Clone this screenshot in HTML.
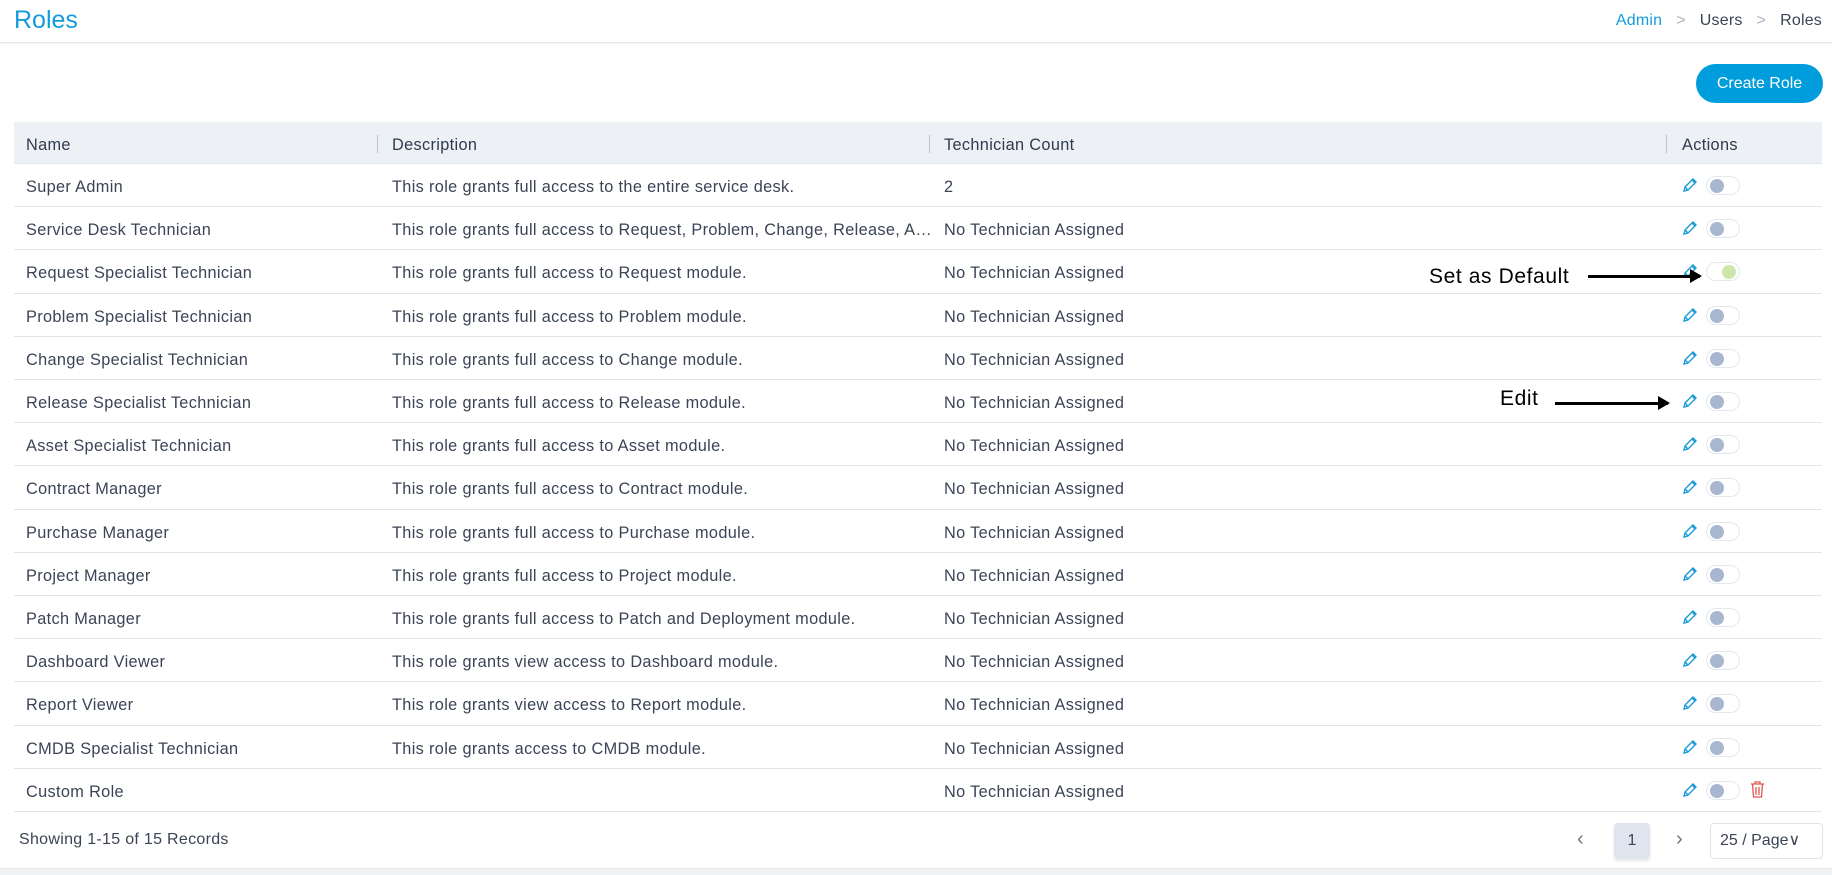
<!DOCTYPE html>
<html><head><meta charset="utf-8"><style>
*{box-sizing:border-box;margin:0;padding:0}
body{width:1832px;height:875px;background:#fff;font-family:"Liberation Sans",sans-serif;color:#3b4456;position:relative;overflow:hidden}
.top{position:absolute;left:0;top:0;width:1832px;height:43px;border-bottom:1px solid #dfe4ec;box-shadow:0 1px 2px rgba(0,0,0,.03)}
.title{position:absolute;left:14px;top:6px;font-size:25px;color:#139cdb}
.bc{position:absolute;right:10px;top:12px;font-size:16px;color:#3b4456;letter-spacing:.2px}
.bc span.a{color:#139cdb}.bc .sep{color:#aab3c0;margin:0 14px}
.btn{position:absolute;left:1696px;top:64px;width:127px;height:39px;border-radius:20px;background:#009ddc;color:#fff;font-size:16px;text-align:center;line-height:39px}
.th{position:absolute;left:14px;top:122px;width:1808px;height:42px;background:#edf1f6;border-bottom:1px solid #dfe4ec}
.row{position:absolute;left:14px;width:1808px;height:43.2px;border-bottom:1px solid #dfe4ec}
.c{position:absolute;top:0;line-height:46px;font-size:16.3px;letter-spacing:.35px;white-space:nowrap;overflow:hidden;text-overflow:ellipsis}
.dv{position:absolute;top:13px;width:1px;height:18px;background:#b8c2cf}
.pen{position:absolute;left:1668px;top:13px}
.tg{position:absolute;left:1692px;top:12px;width:34px;height:19px;border:1px solid #e3e8ef;border-radius:10px}
.tg i{position:absolute;left:3px;top:2px;width:14px;height:14px;border-radius:50%;background:#a8b7cf}
.tg.on i{left:auto;right:3px;background:#cde6ac}
.ann{position:absolute;font-size:21px;letter-spacing:.6px;color:#000}
.arr{position:absolute;height:3px;background:#000}
.arr:after{content:"";position:absolute;right:-2px;top:-6px;border-left:12px solid #000;border-top:7.5px solid transparent;border-bottom:7.5px solid transparent}
</style></head><body>
<div class="top"><div class="title">Roles</div>
<div class="bc"><span class="a">Admin</span><span class="sep">&gt;</span>Users<span class="sep">&gt;</span>Roles</div></div>
<div class="btn">Create Role</div>
<div class="th">
<div class="c" style="left:12px;color:#2f3a4c">Name</div>
<div class="dv" style="left:363px"></div>
<div class="c" style="left:378px;color:#2f3a4c">Description</div>
<div class="dv" style="left:915px"></div>
<div class="c" style="left:930px;color:#2f3a4c">Technician Count</div>
<div class="dv" style="left:1652px"></div>
<div class="c" style="left:1668px;color:#2f3a4c">Actions</div>
</div>
<div id="rows"></div>
<div style="position:absolute;left:19px;top:831px;font-size:16px;letter-spacing:.3px">Showing 1-15 of 15 Records</div>
<div style="position:absolute;left:1577px;top:828px;font-size:20px;color:#6b7585">&#8249;</div>
<div style="position:absolute;left:1614px;top:823px;width:36px;height:36px;background:#dfe5ee;border-radius:4px;text-align:center;line-height:36px;font-size:16px;box-shadow:0 2px 3px rgba(0,0,0,.1)">1</div>
<div style="position:absolute;left:1676px;top:828px;font-size:20px;color:#6b7585">&#8250;</div>
<div style="position:absolute;left:1710px;top:823px;width:113px;height:36px;border:1px solid #dfe4ec;border-radius:4px;font-size:16px;line-height:34px;padding-left:9px">25 / Page&#8744;</div>
<div style="position:absolute;left:0;top:868px;width:1832px;height:7px;background:#f1f2f4;border-top:1px solid #e3e5e8"></div>
<div class="ann" style="left:1429px;top:265px">Set as Default</div>
<div class="arr" style="left:1588px;top:275px;width:112px"></div>
<div class="ann" style="left:1500px;top:387px">Edit</div>
<div class="arr" style="left:1555px;top:402px;width:113px"></div>
<script>
var d=[["Super Admin","This role grants full access to the entire service desk.","2"],
["Service Desk Technician","This role grants full access to Request, Problem, Change, Release, Asset, Contract, Purchase, Project modules.",""],
["Request Specialist Technician","This role grants full access to Request module."],
["Problem Specialist Technician","This role grants full access to Problem module."],
["Change Specialist Technician","This role grants full access to Change module."],
["Release Specialist Technician","This role grants full access to Release module."],
["Asset Specialist Technician","This role grants full access to Asset module."],
["Contract Manager","This role grants full access to Contract module."],
["Purchase Manager","This role grants full access to Purchase module."],
["Project Manager","This role grants full access to Project module."],
["Patch Manager","This role grants full access to Patch and Deployment module."],
["Dashboard Viewer","This role grants view access to Dashboard module."],
["Report Viewer","This role grants view access to Report module."],
["CMDB Specialist Technician","This role grants access to CMDB module."],
["Custom Role",""]];
var pen='<svg width="16" height="16" viewBox="0 0 16 16" fill="none" stroke="#1a9ad6" stroke-width="1.4"><path d="M2 14l1-4 8-8 3 3-8 8z M10 3l3 3 M3 10l3 3"/></svg>';
var trash='<svg width="15" height="17" viewBox="0 0 15 17" fill="none" stroke="#e0574f" stroke-width="1.3"><path d="M1 3h13 M5 3V1h5v2 M2.5 3l1 13h8l1-13 M6 6v8 M9 6v8"/></svg>';
var h="";
d.forEach(function(r,i){var t=164+i*43.2;
h+='<div class="row" style="top:'+t+'px"><div class="c" style="left:12px">'+r[0]+'</div><div class="c" style="left:378px;width:545px">'+r[1]+'</div><div class="c" style="left:930px">'+(r[2]?r[2]:'No Technician Assigned')+'</div><div class="pen">'+pen+'</div><div class="tg'+(i==2?' on':'')+'"><i></i></div>'+(i==14?'<div style="position:absolute;left:1736px;top:12px">'+trash+'</div>':'')+'</div>';});
document.getElementById("rows").innerHTML=h;
</script>
</body></html>
